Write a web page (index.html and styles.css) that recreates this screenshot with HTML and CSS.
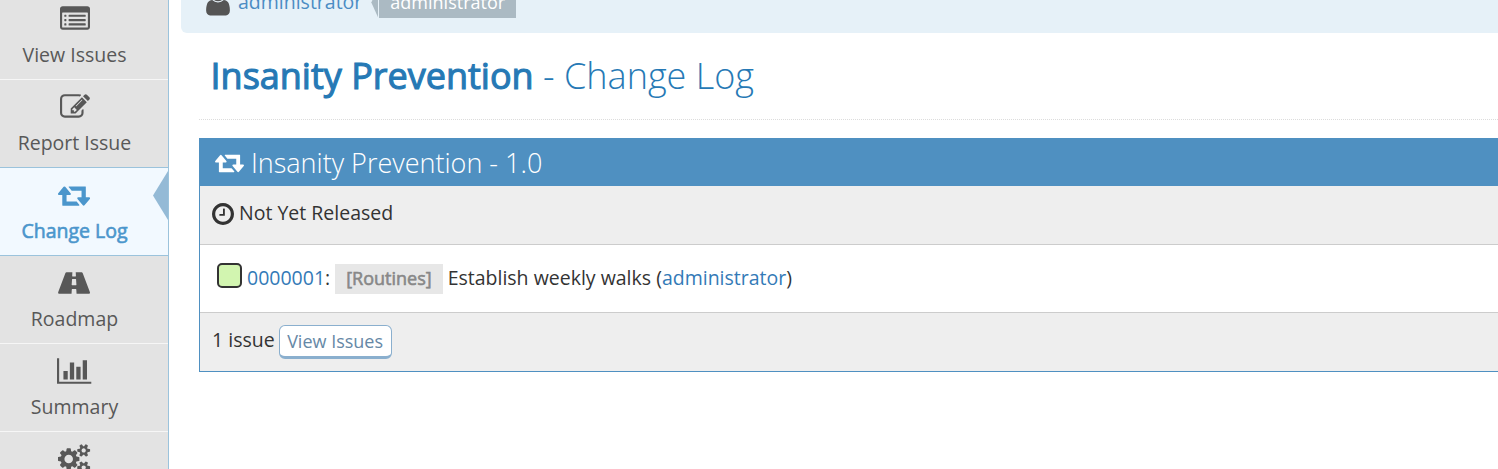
FILE: index.html
```html
<!DOCTYPE html>
<html lang="en">
<head>
<meta charset="utf-8">
<title>Change Log</title>
<link rel="stylesheet" href="styles.css">
</head>
<body>
<svg class="defs" width="0" height="0">
  <symbol id="retweet" viewBox="0 0 1920 1792"><path d="M1280 1504q0 13-9.5 22.5t-22.5 9.5h-960q-8 0-13.5-2t-9-7-5.5-8-3-11.5-1-11.5v-600h-192q-26 0-45-19t-19-45q0-24 15-41l320-384q19-22 49-22t49 22l320 384q15 17 15 41 0 26-19 45t-45 19h-192v384h576q16 0 25 11l160 192q7 10 7 21zm640-416q0 24-15 41l-320 384q-20 23-49 23t-49-23l-320-384q-15-17-15-41 0-26 19-45t45-19h192v-384h-576q-16 0-25-12l-160-192q-7-9-7-20 0-13 9.5-22.5t22.5-9.5h960q8 0 13.5 2t9 7 5.5 8 3 11.5 1 11.5v600h192q26 0 45 19t19 45z"/></symbol>
</svg>
<div class="page">
  <nav class="sidebar">
    <a class="item">
      <svg class="w1792" viewBox="0 0 1792 1792"><path fill-rule="evenodd" d="M160 128h1472q66 0 113 47t47 113v1088q0 66-47 113t-113 47H160q-66 0-113-47T0 1376V288q0-66 47-113t113-47zM160 512q-32 0-32 32v832q0 32 32 32h1472q32 0 32-32V544q0-32-32-32zM288 640h64q32 0 32 32v64q0 32-32 32h-64q-32 0-32-32v-64q0-32 32-32zM288 896h64q32 0 32 32v64q0 32-32 32h-64q-32 0-32-32v-64q0-32 32-32zM288 1152h64q32 0 32 32v64q0 32-32 32h-64q-32 0-32-32v-64q0-32 32-32zM544 640h960q32 0 32 32v64q0 32-32 32H544q-32 0-32-32v-64q0-32 32-32zM544 896h960q32 0 32 32v64q0 32-32 32H544q-32 0-32-32v-64q0-32 32-32zM544 1152h960q32 0 32 32v64q0 32-32 32H544q-32 0-32-32v-64q0-32 32-32z"/></svg>
      <span>View Issues</span>
    </a>
    <a class="item">
      <svg class="w1792" viewBox="0 0 1792 1792"><path d="M888 1184l116-116-152-152-116 116v56h96v96h56zm440-720q-16-16-33 1l-350 350q-17 17-1 33t33-1l350-350q17-17 1-33zm80 594v190q0 119-84.5 203.5t-203.5 84.5h-832q-119 0-203.5-84.5t-84.5-203.5v-832q0-119 84.5-203.5t203.5-84.5h832q63 0 117 25 15 7 18 23 3 17-9 29l-49 49q-14 14-32 8-23-6-45-6h-832q-66 0-113 47t-47 113v832q0 66 47 113t113 47h832q66 0 113-47t47-113v-126q0-13 9-22l64-64q15-15 35-7t20 29zm-96-738l288 288-672 672h-288v-288zm444 132l-92 92-288-288 92-92q28-28 68-28t68 28l152 152q28 28 28 68t-28 68z"/></svg>
      <span>Report Issue</span>
    </a>
    <a class="item active">
      <svg class="w1920"><use href="#retweet"/></svg>
      <span class="faux-bold">Change Log</span>
      <i class="notch"></i>
    </a>
    <a class="item after-active">
      <svg class="w1920" viewBox="0 0 1920 1792"><path fill-rule="evenodd" d="M510 256H860L848 470Q846 500 870 500H1050Q1074 500 1072 470L1060 256H1410Q1455 256 1475 300L1900 1420Q1940 1536 1860 1536H1110L1095 1290Q1092 1260 1065 1260H855Q828 1260 825 1290L810 1536H60Q-20 1536 20 1420L445 300Q465 256 510 256zM863 650Q842 650 840 675L818 995Q816 1024 840 1024H1080Q1104 1024 1102 995L1080 675Q1078 650 1057 650z"/></svg>
      <span>Roadmap</span>
    </a>
    <a class="item">
      <svg class="w2048" viewBox="0 0 2048 1792"><path d="M640 896v512h-256v-512h256zm384-512v1024h-256v-1024h256zm1024 1152v128h-2048v-1536h128v1408h1920zm-640-896v768h-256v-768h256zm384-384v1152h-256v-1152h256z"/></svg>
      <span>Summary</span>
    </a>
    <a class="item">
      <svg class="w1920" viewBox="0 0 1920 1792"><path d="M896 896q0-106-75-181t-181-75-181 75-75 181 75 181 181 75 181-75 75-181zm768 512q0-52-38-90t-90-38-90 38-38 90q0 53 37.5 90.5t90.5 37.5 90.5-37.5 37.5-90.5zm0-1024q0-52-38-90t-90-38-90 38-38 90q0 53 37.5 90.5t90.5 37.5 90.5-37.5 37.5-90.5zm-384 421v185q0 10-7 19.5t-16 10.5l-155 24q-11 35-32 76 34 48 90 115 7 11 7 20 0 12-7 19-23 30-82.5 89.5t-78.5 59.5q-11 0-21-7l-115-90q-37 19-77 31-11 108-23 155-7 24-30 24h-186q-11 0-20-7.5t-10-17.5l-23-153q-34-10-75-31l-118 89q-7 7-20 7-11 0-21-8-144-133-144-160 0-9 7-19 10-14 41-53t47-61q-23-44-35-82l-152-24q-10-1-17-9.5t-7-19.5v-185q0-10 7-19.5t16-10.5l155-24q11-35 32-76-34-48-90-115-7-11-7-20 0-12 7-20 22-30 82-89t79-59q11 0 21 7l115 90q34-18 77-32 11-108 23-154 7-24 30-24h186q11 0 20 7.5t10 17.5l23 153q34 10 75 31l118-89q8-7 20-7 11 0 21 8 144 133 144 160 0 8-7 19-12 16-42 54t-45 60q23 48 34 82l152 23q10 2 17 10.5t7 19.5zm640 533v140q0 16-149 31-12 27-30 52 51 113 51 138 0 4-4 7-122 71-124 71-8 0-46-47t-52-68q-20 2-30 2t-30-2q-14 21-52 68t-46 47q-2 0-124-71-4-3-4-7 0-25 51-138-18-25-30-52-149-15-149-31v-140q0-16 149-31 13-29 30-52-51-113-51-138 0-4 4-7 4-2 35-20t59-34 30-16q8 0 46 46.5t52 67.5q20-2 30-2t30 2q51-71 92-112l6-2q4 0 124 70 4 3 4 7 0 25-51 138 17 23 30 52 149 15 149 31zm0-1024v140q0 16-149 31-12 27-30 52 51 113 51 138 0 4-4 7-122 71-124 71-8 0-46-47t-52-68q-20 2-30 2t-30-2q-14 21-52 68t-46 47q-2 0-124-71-4-3-4-7 0-25 51-138-18-25-30-52-149-15-149-31v-140q0-16 149-31 13-29 30-52-51-113-51-138 0-4 4-7 4-2 35-20t59-34 30-16q8 0 46 46.5t52 67.5q20-2 30-2t30 2q51-71 92-112l6-2q4 0 124 70 4 3 4 7 0 25-51 138 17 23 30 52 149 15 149 31z"/></svg>
    </a>
  </nav>
  <main class="main">
    <div class="crumbs">
      <svg class="user" viewBox="0 128 1280 1536"><path d="M1280 1399q0 109-62.5 187t-150.5 78h-854q-88 0-150.5-78t-62.5-187q0-85 8.5-160.5t31.5-152 58.5-131 94-89 134.5-34.5q131 128 313 128t313-128q76 0 134.5 34.5t94 89 58.5 131 31.5 152 8.5 160.5zm-256-887q0 159-112.5 271.5t-271.5 112.5-271.5-112.5-112.5-271.5 112.5-271.5 271.5-112.5 271.5 112.5 112.5 271.5z"/></svg>
      <a class="crumb-name">administrator</a>
      <span class="label-arrow"></span><span class="label">administrator</span>
    </div>
    <h1 class="title"><span class="faux-bold">Insanity Prevention</span> - Change Log</h1>
    <section class="panel">
      <h4 class="panel-head"><svg><use href="#retweet"/></svg><span>Insanity Prevention - 1.0</span></h4>
      <div class="row release">
        <svg class="clock" viewBox="128 128 1536 1536"><path d="M1024 544v448q0 14-9 23t-23 9h-320q-14 0-23-9t-9-23v-64q0-14 9-23t23-9h224v-352q0-14 9-23t23-9h64q14 0 23 9t9 23zm416 352q0-148-73-273t-198-198-273-73-273 73-198 198-73 273 73 273 198 198 273 73 273-73 198-198 73-273zm224 0q0 209-103 385.5t-279.5 279.5-385.5 103-385.5-103-279.5-279.5-103-385.5 103-385.5 279.5-279.5 385.5-103 385.5 103 279.5 279.5 103 385.5z"/></svg>
        <span>Not Yet Released</span>
      </div>
      <div class="row issue">
        <i class="status"></i>
        <span><a>0000001</a>:</span>
        <span class="category faux-bold">[Routines]</span>
        <span>Establish weekly walks (<a>administrator</a>)</span>
      </div>
      <div class="row foot">
        <span>1 issue</span>
        <a class="button">View Issues</a>
      </div>
    </section>
  </main>
</div>
</body>
</html>
```
FILE: styles.css
```css
* { box-sizing: border-box; }
body {
  margin: 0;
  background: #fff;
  color: #333;
  font: 400 19.5px/30px "Open Sans", sans-serif;
  overflow: hidden;
}
.defs { position: absolute; }
svg { display: block; fill: currentColor; flex: none; }
.page { display: flex; height: 469px; overflow: hidden; }
.faux-bold { -webkit-text-stroke: 0.6px currentColor; }

.sidebar {
  flex: none;
  width: 169px;
  height: 478px;
  margin-top: -9px;
  background: #e3e3e3;
  border-right: 1px solid #9bc3dc;
  overflow: hidden;
}
.item {
  position: relative;
  display: flex;
  flex-direction: column;
  align-items: center;
  height: 88px;
  padding: 12.3px 19px 0 0;
  border-top: 1px solid #f6f6f6;
  color: #585858;
}
.item svg { height: 30px; }
.item span { margin-top: 5.7px; white-space: nowrap; }
.w1792 { width: 30px; }
.w1920 { width: 32.1px; }
.w2048 { width: 34.3px; }
.active { background: #f2f9ff; border-color: #9bc3dc; color: #4b96cc; }
.after-active { border-color: #9bc3dc; }
.notch {
  position: absolute;
  top: 3px;
  right: 0;
  width: 15px;
  height: 49px;
  background: #94bad6;
  clip-path: polygon(100% 0, 0 50%, 100% 100%);
}

.main { flex: 1; min-width: 0; }
.crumbs {
  display: flex;
  height: 49px;
  margin: -16px 0 0 12px;
  padding: 3px 0 0 25px;
  background: #e6f1f8;
  border-bottom-left-radius: 6px;
}
.user { width: 24px; height: 28.5px; color: #555; }
.crumb-name { margin-left: 8px; color: #4b8cc4; }
.label-arrow {
  width: 7px;
  height: 31px;
  margin-left: 9px;
  background: #abbac3;
  clip-path: polygon(100% 0, 0 50%, 100% 100%);
}
.label {
  height: 31px;
  margin-left: 1px;
  padding: 0 11px;
  background: #abbac3;
  color: #fff;
  font-size: 18px;
}
.title {
  height: 87px;
  margin: 0 0 0 30px;
  padding: 18px 0 0 11.5px;
  border-bottom: 1px dotted #dcdcdc;
  color: #2679b5;
  font-size: 36px;
  font-weight: 300;
  line-height: 50px;
  white-space: nowrap;
}
.title .faux-bold { font-weight: 400; -webkit-text-stroke-width: 1.1px; }

.panel {
  height: 234px;
  margin: 18px 0 0 30px;
  border: 1px solid #4f90c1;
  border-width: 0 0 1px 1px;
}
.panel-head {
  display: flex;
  height: 48px;
  margin: 0 0 0 -1px;
  padding-left: 15.5px;
  gap: 7.5px;
  background: #4f90c1;
  color: #fff;
  font-size: 27px;
  font-weight: 300;
  line-height: 49px;
}
.panel-head svg { width: 29px; height: 27px; margin-top: 10.5px; }
.row { display: flex; gap: 5px; white-space: pre; }
.row a { color: #337ab7; }
.release { height: 58px; padding: 12px; background: #eee; }
.clock { width: 22px; height: 22px; margin: 5px 0 0 -0.5px; }
.release span { margin-left: 0.5px; }
.issue {
  height: 69px;
  padding: 18px 17px;
  border: solid #ccc;
  border-width: 1px 0;
}
.status {
  width: 25px;
  height: 25px;
  border: 2px solid #333;
  border-radius: 5px;
  background: #d2f5b0;
}
.category {
  height: 30px;
  margin-top: 1px;
  padding: 0 11px;
  background: #e7e7e7;
  color: #888;
  font-size: 18px;
  line-height: 29px;
}
.foot { height: 58px; padding: 12px; gap: 4px; background: #eee; }
.row .button {
  height: 34px;
  padding: 0 7.5px;
  border: 1px solid #8aafce;
  border-bottom-width: 3px;
  border-radius: 6px;
  background: #fff;
  color: #6688a6;
  font-size: 18px;
}
```
